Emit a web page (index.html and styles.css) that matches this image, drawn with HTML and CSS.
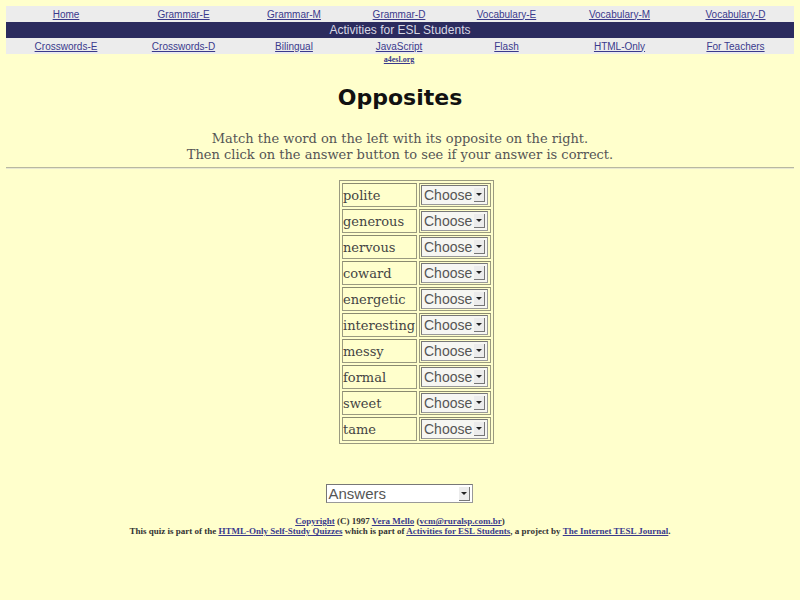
FILE: index.html
```html
<!DOCTYPE html>
<html>
<head>
<meta charset="utf-8">
<title>Opposites</title>
<link rel="stylesheet" href="styles.css">
</head>
<body>
<div class="nav">
  <div class="nav-row light">
    <a href="#">Home</a><a href="#">Grammar-E</a><a href="#">Grammar-M</a><a href="#">Grammar-D</a><a href="#">Vocabulary-E</a><a href="#">Vocabulary-M</a><a href="#">Vocabulary-D</a>
  </div>
  <div class="nav-row dark">Activities for ESL Students</div>
  <div class="nav-row light">
    <a href="#">Crosswords-E</a><a href="#">Crosswords-D</a><a href="#">Bilingual</a><a href="#">JavaScript</a><a href="#">Flash</a><a href="#">HTML-Only</a><a href="#">For Teachers</a>
  </div>
  <div class="sub-row"><span></span><span></span><span></span><a href="#">a4esl.org</a></div>
</div>

<h1 class="title">Opposites</h1>
<p class="intro">Match the word on the left with its opposite on the right.<br>Then click on the answer button to see if your answer is correct.</p>
<hr class="rule">

<table class="quiz">
  <tr><td class="word">polite</td><td class="pick"><span class="sel">Choose<span class="arrow"></span></span></td></tr>
  <tr><td class="word">generous</td><td class="pick"><span class="sel">Choose<span class="arrow"></span></span></td></tr>
  <tr><td class="word">nervous</td><td class="pick"><span class="sel">Choose<span class="arrow"></span></span></td></tr>
  <tr><td class="word">coward</td><td class="pick"><span class="sel">Choose<span class="arrow"></span></span></td></tr>
  <tr><td class="word">energetic</td><td class="pick"><span class="sel">Choose<span class="arrow"></span></span></td></tr>
  <tr><td class="word">interesting</td><td class="pick"><span class="sel">Choose<span class="arrow"></span></span></td></tr>
  <tr><td class="word">messy</td><td class="pick"><span class="sel">Choose<span class="arrow"></span></span></td></tr>
  <tr><td class="word">formal</td><td class="pick"><span class="sel">Choose<span class="arrow"></span></span></td></tr>
  <tr><td class="word">sweet</td><td class="pick"><span class="sel">Choose<span class="arrow"></span></span></td></tr>
  <tr><td class="word">tame</td><td class="pick"><span class="sel">Choose<span class="arrow"></span></span></td></tr>
</table>

<div class="answers-wrap"><span class="answers">Answers<span class="arrow"></span></span></div>

<div class="footer">
  <div><a href="#">Copyright</a> (C) 1997 <a href="#">Vera Mello</a> (<a href="#">vcm@ruralsp.com.br</a>)</div>
  <div>This quiz is part of the <a href="#">HTML-Only Self-Study Quizzes</a> which is part of <a href="#">Activities for ESL Students</a>, a project by <a href="#">The Internet TESL Journal</a>.</div>
</div>
</body>
</html>
```
FILE: styles.css
```css
html, body {
  background: #ffffcc;
}
body {
  margin: 6px;
  font-family: "Liberation Sans", Arial, sans-serif;
  color: #333;
}
.nav {
  width: 788px;
}
.nav-row, .sub-row {
  display: grid;
  grid-template-columns: 120px 115px 106px 104px 111px 115px 117px;
}
.nav-row {
  height: 16px;
  align-items: center;
  font-size: 10px;
}
.nav-row.light {
  background: #ececec;
}
.nav-row a, .sub-row a {
  color: #3a3a8c;
  text-align: center;
  text-decoration: underline;
}
.nav-row.dark {
  display: block;
  background: #2b2b5e;
  color: #d8d8e4;
  text-align: center;
  font-size: 12px;
  line-height: 16px;
}
.sub-row {
  font-family: "Liberation Serif", serif;
  font-size: 8px;
  line-height: 11px;
  font-weight: bold;
}
.title {
  margin: 18px 0 0;
  text-align: center;
  font-family: "DejaVu Sans", sans-serif;
  font-size: 22px;
  font-weight: bold;
  color: #111;
  line-height: 30px;
}
.intro {
  margin: 18px 0 0;
  text-align: center;
  font-family: "DejaVu Serif", serif;
  font-size: 13px;
  line-height: 16px;
  color: #555;
}
.rule {
  margin: 4px 0 0;
  border: 0;
  border-top: 1px solid #b8b8a0;
  border-bottom: 1px solid #e8e8d0;
  height: 0;
}
.quiz {
  margin: 11px 0 0 333px;
  border: 1px solid #9a9a80;
  border-spacing: 2px;
}
.quiz td {
  border: 1px solid #9a9a80;
  border-top-color: #8a8a70;
  height: 24px;
  padding: 0;
  box-sizing: border-box;
}
.word {
  width: 75px;
  font-family: "DejaVu Serif", serif;
  font-size: 13px;
  color: #444;
}
.pick {
  width: 72px;
  padding-left: 1px !important;
}
.sel, .answers {
  display: inline-flex;
  align-items: center;
  justify-content: space-between;
  box-sizing: border-box;
  background: #f6f6f2;
  border: 1px solid #999;
  border-top-color: #777;
  border-left-color: #777;
  font-family: "Liberation Sans", Arial, sans-serif;
  color: #555;
  vertical-align: middle;
}
.sel {
  width: 67px;
  height: 20px;
  font-size: 14px;
  padding-left: 2px;
}
.arrow {
  width: 10px;
  height: 13px;
  margin-right: 2px;
  background: #ececec;
  border-right: 1px solid #777;
  border-bottom: 1px solid #777;
  position: relative;
}
.arrow::after {
  content: "";
  position: absolute;
  left: 2px;
  top: 5px;
  border-left: 3px solid transparent;
  border-right: 3px solid transparent;
  border-top: 3px solid #222;
}
.answers-wrap {
  text-align: center;
  margin-top: 40px;
  padding-right: 2px;
}
.answers {
  width: 147px;
  height: 19px;
  font-size: 15px;
  background: #fff;
  padding-left: 2px;
}
.footer {
  margin-top: 13px;
  text-align: center;
  font-family: "Liberation Serif", serif;
  font-size: 9px;
  line-height: 10px;
  font-weight: bold;
  color: #333;
}
.footer a {
  color: #3a3a8c;
}
```
